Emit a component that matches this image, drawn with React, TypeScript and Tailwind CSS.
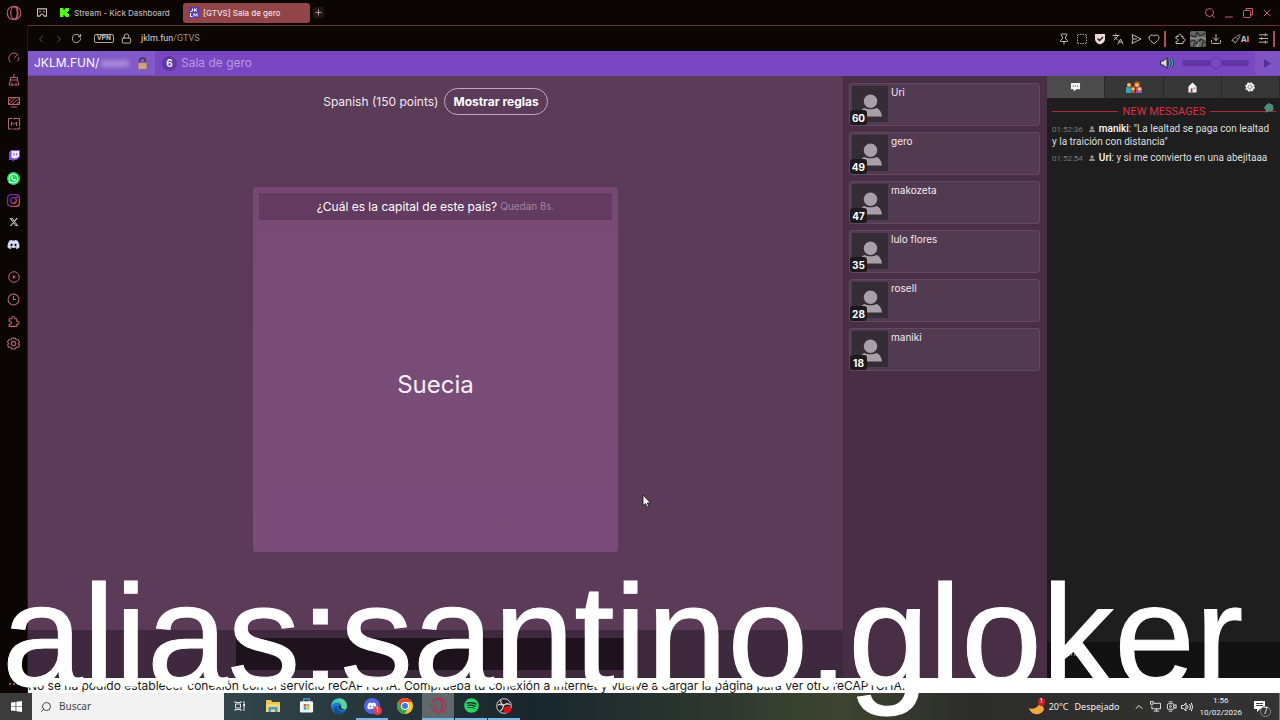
import type { ReactNode } from "react";
import {
  ChevronLeft,
  ChevronRight,
  ChevronUp,
  Clock3,
  Download,
  Heart,
  Languages,
  Lock,
  Minus,
  Pin,
  Plus,
  RotateCw,
  Search,
  SquareDashed,
  X,
} from "lucide-react";
import { FaDiscord, FaSpotify, FaWhatsapp, FaXTwitter } from "react-icons/fa6";

const players = [
  { name: "Uri", score: 60 },
  { name: "gero", score: 49 },
  { name: "makozeta", score: 47 },
  { name: "lulo flores", score: 35 },
  { name: "rosell", score: 28 },
  { name: "maniki", score: 18 },
];

const messages = [
  { time: "01:52:36", author: "maniki", text: '"La lealtad se paga con lealtad y la traición con distancia"' },
  { time: "01:52:54", author: "Uri", text: "y si me convierto en una abejitaaa" },
];

function OperaIcon({ className }: { className: string }) {
  return (
    <svg viewBox="0 0 16 16" className={className} fill="none" stroke="currentColor" strokeWidth="1.1">
      <circle cx="8" cy="8" r="6.8" />
      <ellipse cx="8" cy="8" rx="3.2" ry="6" />
      <path d="M10 2.3c2.6 1.6 2.6 9.8 0 11.4" />
    </svg>
  );
}

function PuzzleIcon({ className }: { className: string }) {
  return (
    <svg viewBox="0 0 24 24" className={className} fill="none" stroke="currentColor" strokeWidth="2" strokeLinejoin="round">
      <path d="M4 7h4.5a3.2 3.2 0 1 1 6 0H18v4.500a3 3 0 1 1 0 5.500V21H4v-4a3 3 0 1 0 0-5.500z" />
    </svg>
  );
}

function Person({ className }: { className: string }) {
  return (
    <svg viewBox="0 0 24 24" className={className} fill="currentColor">
      <circle cx="12" cy="7.5" r="7" />
      <path d="M0 23.500c.5-5 3-8.300 6-9 3 2 9 2 12 0 3 .7 5.500 4 6 9z" />
    </svg>
  );
}

function IconButton({ label, className, children }: { label: string; className?: string; children: ReactNode }) {
  return (
    <button type="button" aria-label={label} className={`flex items-center justify-center ${className ?? ""}`}>
      {children}
    </button>
  );
}

function TabStrip() {
  return (
    <div className="flex h-[25px] shrink-0 items-center bg-[#0b0504] font-['Inter',sans-serif] text-[8px] font-medium">
      <IconButton label="Menú de Opera" className="w-7 text-[#c8606e]">
        <OperaIcon className="size-4" />
      </IconButton>
      <IconButton label="Espacios de trabajo" className="w-[27px] text-[#c9bdbd]">
        <svg viewBox="0 0 12 10" className="h-[9px] w-3" fill="none" stroke="currentColor" strokeWidth="1.200">
          <path d="M1 1h10v8H8.500L7 7H5L3.500 9H1z" />
          <path d="M3 4h1.500M7.500 4H9" />
        </svg>
      </IconButton>
      <a href="#stream" className="flex w-[128px] items-center gap-[5px] pl-[5px] whitespace-nowrap text-[#b9b3b2]">
        <svg viewBox="0 0 9 9" className="size-[9px]" fill="#53fc18">
          <path d="M0 0h3.500v2h1V1h1V0H9v3H8v1H7v1h1v1h1v3H5.500V8h-1V7h-1v2H0z" />
        </svg>
        Stream - Kick Dashboard
      </a>
      <a href="#sala" className="flex h-5 w-[127px] items-center gap-1 rounded-[3px] bg-[#914549] pl-[6px] text-[#f5dfe0]">
        <svg viewBox="0 0 10 11" className="h-[11px] w-[10px]">
          <rect width="10" height="11" rx="2" fill="#5737c8" />
          <path d="M3.500 1.500v2.500L1.500 4.500M5.500 1.500v3M8 1.500L6 3l2 1.500M1.500 6v3.500h2M5 9.500V6.500l1.500 2 1.500-2v3" fill="none" stroke="#fff" />
        </svg>
        [GTVS] Sala de gero
      </a>
      <IconButton label="Nueva pestaña" className="ml-[3px] size-[11px] rounded-[2px] bg-[#201716] text-[#cfc4c3]">
        <Plus className="size-[9px]" />
      </IconButton>
      <div className="ml-auto flex items-center gap-[7px] pr-[7px] text-[#c8606e]">
        <IconButton label="Buscar pestañas"><Search className="size-3" /></IconButton>
        <IconButton label="Minimizar" className="pt-2"><Minus className="size-3" /></IconButton>
        <IconButton label="Restaurar">
          <svg viewBox="0 0 12 12" className="size-3" fill="none" stroke="currentColor">
            <rect x="1.500" y="3.500" width="7" height="7" rx="1" />
            <path d="M4 3.500v-2h6.500V8h-2" />
          </svg>
        </IconButton>
        <IconButton label="Cerrar"><X className="size-3" /></IconButton>
      </div>
    </div>
  );
}

function Sidebar() {
  const item = "h-[22px] w-7";
  return (
    <nav aria-label="Barra lateral" className="flex w-7 shrink-0 flex-col items-center border-r border-[#2c1013] bg-[#0b0504] pt-[22px] text-[#b8666d]">
      <IconButton label="GX Control" className={item}>
        <svg viewBox="0 0 12 12" className="size-3" fill="none" stroke="currentColor">
          <path d="M3 10.500A5 5 0 1 1 9 2M10.800 5A5 5 0 0 1 9.500 9.500M6 6l4.500-4" />
        </svg>
      </IconButton>
      <IconButton label="GX Cleaner" className={item}>
        <svg viewBox="0 0 12 12" className="size-3" fill="none" stroke="currentColor">
          <path d="M6 0v3M2.500 3.500h7v2.500h-7zM2.500 6L1 11h10L9.500 6M4 11V8.500M8 11V8.500" />
        </svg>
      </IconButton>
      <IconButton label="Fondos" className={item}>
        <svg viewBox="0 0 12 12" className="size-3" fill="none" stroke="currentColor">
          <path d="M.5 1.500h11v7H.5zM1 5l4-3.500M1 8l7-6.500M4 8.500l7-6M8 8.500l3.500-3M3 11h6" />
        </svg>
      </IconButton>
      <IconButton label="Mods" className={item}>
        <svg viewBox="0 0 12 12" className="size-3" fill="none" stroke="currentColor">
          <path d="M4 .5H.5V11H4M5 .5h6.500V8M5 11h6.500V9M3.500 8V4L6 6.500 8.500 4v4" />
        </svg>
      </IconButton>
      <IconButton label="Twitch" className="mt-[10px] h-[22px] w-7">
        <svg viewBox="0 0 12 12" className="size-3">
          <path d="M3 0h9v7L8.500 10H6.500L4.500 12V10H1V2.500z" fill="#7a48e0" />
          <path d="M3.500 1H11v5.500L9 8H7.500L6 9.300V8H3.500z" fill="#f1ebff" />
          <path d="M6 3v2.500M8.800 3v2.500" stroke="#7a48e0" />
        </svg>
      </IconButton>
      <IconButton label="WhatsApp" className={item}>
        <span className="flex size-[13px] items-center justify-center rounded-full bg-[#22d960] text-white"><FaWhatsapp className="size-[11px]" /></span>
      </IconButton>
      <IconButton label="Instagram" className="h-[22px] w-7">
        <svg viewBox="0 0 12 12" className="size-[13px]" fill="none" stroke="url(#insta)" strokeWidth="1.200">
          <defs>
            <linearGradient id="insta" x1="0" y1="0" x2="1" y2="1">
              <stop offset="0" stopColor="#5b2bc0" />
              <stop offset=".55" stopColor="#a0318f" />
              <stop offset="1" stopColor="#d0713a" />
            </linearGradient>
          </defs>
          <rect x=".6" y=".6" width="10.800" height="10.800" rx="3" />
          <circle cx="6" cy="6" r="2.600" />
          <circle cx="9" cy="3" r=".3" />
        </svg>
      </IconButton>
      <IconButton label="X" className="h-[22px] w-7 text-[#d5d0d0]"><FaXTwitter className="size-[10px]" /></IconButton>
      <IconButton label="Discord" className="h-[22px] w-7 text-[#d6d9f5]"><FaDiscord className="size-[13px]" /></IconButton>
      <IconButton label="Reproductor" className="mt-[11px] h-[22px] w-7">
        <svg viewBox="0 0 12 12" className="size-3" fill="none" stroke="currentColor">
          <circle cx="6" cy="6" r="5.300" />
          <path d="M4.800 4v4L8 6z" fill="currentColor" stroke="none" />
        </svg>
      </IconButton>
      <IconButton label="Historial" className={item}><Clock3 className="size-[13px]" /></IconButton>
      <IconButton label="Extensiones" className={item}><PuzzleIcon className="size-[13px]" /></IconButton>
      <IconButton label="Configuración" className={item}>
        <svg viewBox="0 0 12 12" className="size-[13px]" fill="none" stroke="currentColor">
          <path d="M4.500 1h3l1 1.500h2L11.500 5l-1 1 1 1.500-1 2h-2L7.500 11h-3l-1-1.500h-2l-1-2 1-1.500-1-1.500 1-2h2z" />
          <circle cx="6" cy="6" r="2" />
        </svg>
      </IconButton>
      <IconButton label="Más" className="mt-auto h-[18px] w-7">
        <svg viewBox="0 0 12 4" className="h-1 w-3" fill="currentColor">
          <circle cx="2" cy="2" r="1" />
          <circle cx="6" cy="2" r="1" />
          <circle cx="10" cy="2" r="1" />
        </svg>
      </IconButton>
    </nav>
  );
}

function AddressBar() {
  return (
    <div className="flex h-[26px] shrink-0 items-center border-t border-[#6d2c31] bg-[#0b0504] text-[#c6bdbb]">
      <div className="flex items-center gap-[6px] pl-[7px]">
        <IconButton label="Atrás" className="text-[#5c5250]"><ChevronLeft className="size-3" /></IconButton>
        <IconButton label="Adelante" className="text-[#5c5250]"><ChevronRight className="size-3" /></IconButton>
        <IconButton label="Recargar"><RotateCw className="size-[11px]" /></IconButton>
      </div>
      <button type="button" className="ml-3 flex h-[9px] items-center rounded-[2px] border border-[#b0a7a5] px-[2px] font-['Roboto',sans-serif] text-[7px] font-bold">VPN</button>
      <Lock className="ml-[7px] size-[11px]" />
      <span className="ml-[9px] font-['Roboto',sans-serif] text-[9px] text-[#dcd6d4]">
        jklm.fun<span className="text-[#a78b89]">/GTVS</span>
      </span>
      <div className="ml-auto flex items-center gap-[6px]">
        <IconButton label="Fijar"><Pin className="size-3" /></IconButton>
        <IconButton label="Captura"><SquareDashed className="size-3" /></IconButton>
        <IconButton label="Bloqueador">
          <svg viewBox="0 0 12 12" className="size-3">
            <path d="M1 1h10v5c0 3-2.500 4.500-5 5.500C3.500 10.500 1 9 1 6z" fill="#ead9d8" />
            <path d="M3.500 5.500l2 2 3.500-3.500" fill="none" stroke="#2a1517" strokeWidth="1.300" />
          </svg>
        </IconButton>
        <IconButton label="Traducir"><Languages className="size-3" /></IconButton>
        <IconButton label="Enviar">
          <svg viewBox="0 0 12 12" className="size-3" fill="none" stroke="currentColor">
            <path d="M2 1.500L11 6l-9 4.500L3 6zM3 6h4" />
          </svg>
        </IconButton>
        <IconButton label="Favoritos"><Heart className="size-3" /></IconButton>
      </div>
      <span className="mr-2 ml-1 h-4 w-[2px] bg-[#a9505a]" />
      <div className="flex items-center gap-1">
        <IconButton label="Extensiones"><PuzzleIcon className="size-3" /></IconButton>
        <IconButton label="Perfil">
          <svg viewBox="0 0 16 16" className="size-4">
            <rect width="16" height="16" rx="2" fill="#666" />
            <path d="M0 4l5 2 2-5 3 4 6-3M0 11l4-2 3 4 4-5 5 4M3 16l2-4M12 16l1-5" fill="none" stroke="#303030" strokeWidth="1.300" />
            <path d="M0 7l6 1 4-2 6 2M7 16l2-5" fill="none" stroke="#a4a4a4" />
          </svg>
        </IconButton>
        <IconButton label="Descargas"><Download className="size-3" /></IconButton>
        <button type="button" className="mx-[5px] flex items-center font-['Inter',sans-serif] text-[8px] font-bold">
          <svg viewBox="0 0 12 12" className="size-[10px]" fill="none" stroke="currentColor">
            <path d="M1 8l4-4.500 3.500 3L5 11 3.500 8.500zM7 3l2-1.500L10.500 4 9 6M10 .5l1.500 1" />
          </svg>
          AI
        </button>
        <IconButton label="Panel">
          <svg viewBox="0 0 12 12" className="size-[11px]" fill="none" stroke="currentColor">
            <path d="M1 2h10M1 6h10M1 10h10M8 .5v3M4 4.500v3M8 8.500v3" />
          </svg>
        </IconButton>
        <span className="mr-[5px] h-4 w-[2px] bg-[#a9505a]" />
      </div>
    </div>
  );
}

function RoomHeader() {
  return (
    <header className="flex h-[25px] shrink-0 items-center bg-[#7847c1] pb-px text-[12px] text-white">
      <div className="flex h-full w-[127px] items-center bg-[#8159c8] pl-[6px]">
        <span>JKLM.FUN/</span>
        <span aria-hidden="true" className="ml-[2px] h-[7px] w-7 bg-[#a98ad8] blur-[2px]" />
        <svg viewBox="0 0 12 14" className="mr-[7px] ml-auto h-[13px] w-[11px]">
          <path d="M3 6V4a3 3 0 0 1 6 0v2" fill="none" stroke="#443158" strokeWidth="1.600" />
          <rect x="1" y="6" width="10" height="7.500" rx="1" fill="#cfa184" stroke="#6a4a5c" strokeWidth=".6" />
        </svg>
      </div>
      <span className="ml-[7px] flex size-[15px] items-center justify-center rounded-full bg-[#6039a0] text-[10px] font-semibold">6</span>
      <span className="ml-1 text-[#b898e4]">Sala de gero</span>
      <div className="ml-auto flex h-full items-center">
        <IconButton label="Silenciar">
          <svg viewBox="0 0 14 12" className="h-3 w-[14px]">
            <path d="M.7 4h2.500L7 .8v10.400L3.200 8H.7z" fill="#ddd" stroke="#241735" />
            <path d="M9 3q2 3 0 6M11 1.500q3 4.500 0 9" fill="none" stroke="#241735" strokeWidth="2.800" />
            <path d="M9 3q2 3 0 6M11 1.500q3 4.500 0 9" fill="none" stroke="#49a9c4" strokeWidth="1.500" />
          </svg>
        </IconButton>
        <input
          type="range"
          aria-label="Volumen"
          defaultValue={50}
          className="mr-[6px] ml-2 h-[6px] w-[67px] appearance-none rounded-full bg-[#5f36a3] [&::-webkit-slider-thumb]:size-3 [&::-webkit-slider-thumb]:appearance-none [&::-webkit-slider-thumb]:rounded-full [&::-webkit-slider-thumb]:border [&::-webkit-slider-thumb]:border-[#5f36a3] [&::-webkit-slider-thumb]:bg-[#7847c1]"
        />
        <IconButton label="Reproducir" className="h-full w-[25px] bg-[#8154c6]">
          <svg viewBox="0 0 10 10" className="size-[9px]" fill="#55309a"><path d="M1 0l8 5-8 5z" /></svg>
        </IconButton>
      </div>
    </header>
  );
}

function Game() {
  return (
    <main className="flex min-w-0 flex-1 flex-col bg-[#5c3b59]">
      <div className="flex items-center justify-center gap-[6px] pt-3 text-[12px] text-[#f3e9f2]">
        <span>Spanish (150 points)</span>
        <button type="button" className="h-[27px] rounded-full border border-[#bda9bc] px-2 text-[12px] font-bold text-white">Mostrar reglas</button>
      </div>
      <div className="flex min-h-0 flex-1 items-center justify-center pb-[6px]">
        <section className="flex aspect-square w-[365px] flex-col rounded-[3px] bg-linear-to-b from-[#75486f] via-[#794b76] via-15% to-[#7a4c79] p-[6px]">
          <h1 className="flex h-[27px] items-center justify-center gap-[3px] bg-[#633a60] text-[12px] text-white">
            ¿Cuál es la capital de este país? <span className="text-[10px] text-[#a184a0]">Quedan 8s.</span>
          </h1>
          <p className="flex flex-1 items-center justify-center pt-1 text-[24px] text-[#f6eff6]">Suecia</p>
        </section>
      </div>
      <form className="flex h-12 shrink-0 items-center justify-center bg-[#3f293e]">
        <input aria-label="Respuesta" className="h-8 w-[400px] max-w-full rounded-[3px] bg-[#1e131c] px-2 text-white outline-none" />
      </form>
    </main>
  );
}

function Players() {
  return (
    <aside className="w-[204px] shrink-0 border-l border-[#432b41] bg-[#482f45] pt-[7px] pr-[7px] pl-[5px]">
      <ul className="flex flex-col gap-[6px]">
        {players.map((player) => (
          <li key={player.name} className="relative flex h-[43px] gap-[3px] rounded-[3px] border border-[#624a60] bg-[#523a50] p-[2px] text-[10px] leading-[12px] text-[#f4eaf3]">
            <span className="flex size-9 items-end justify-center bg-[#352d35] pb-[5px] text-[#a99fa9]">
              <Person className="size-[23px]" />
            </span>
            <span>{player.name}</span>
            <span className="absolute bottom-0 left-0 flex h-[15px] w-[17px] items-center justify-center rounded-[3px] bg-[#1d191d] text-[10px] font-bold text-white">
              {player.score}
            </span>
          </li>
        ))}
      </ul>
    </aside>
  );
}

function ChatTab({ label, active, children }: { label: string; active?: boolean; children: ReactNode }) {
  return (
    <button type="button" aria-label={label} className={`flex flex-1 items-center justify-center border-r border-[#292929] ${active ? "bg-[#4b4b4b]" : "bg-[#373737]"}`}>
      {children}
    </button>
  );
}

function Chat() {
  return (
    <aside className="flex w-[233px] shrink-0 flex-col bg-[#1e1e1e] font-['Roboto',sans-serif] text-[10px] leading-[13px] text-[#dedede]">
      <div className="flex h-[22px] shrink-0">
        <ChatTab label="Chat" active>
          <svg viewBox="0 0 12 11" className="h-[10px] w-[11px]">
            <path d="M1 1h10v7H7l-3 2.500V8H1z" fill="#f4f4f4" />
            <path d="M3 4.500h1.200M5.400 4.500h1.200M7.800 4.500H9" stroke="#333" />
          </svg>
        </ChatTab>
        <ChatTab label="Jugadores">
          <svg viewBox="0 0 18 12" className="h-3 w-[18px]">
            <path d="M1 6h5v6H1z" fill="#35a4b5" />
            <path d="M11 6h6v6h-6z" fill="#ab4c89" />
            <circle cx="4" cy="3.500" r="3" fill="#5a2d1c" />
            <circle cx="4" cy="4" r="2" fill="#efba66" />
            <circle cx="12" cy="3.500" r="3.200" fill="#a85222" />
            <circle cx="12" cy="4" r="2" fill="#efba66" />
            <circle cx="8" cy="7.500" r="2.400" fill="#a85222" />
            <circle cx="8" cy="8" r="1.600" fill="#f3cb7a" />
            <circle cx="14.500" cy="8" r="1.800" fill="#f3cb7a" />
            <path d="M6 10h4v2H6z" fill="#d14637" />
            <path d="M12 10h5v2h-5z" fill="#7a63cc" />
          </svg>
        </ChatTab>
        <ChatTab label="Sala">
          <svg viewBox="0 0 10 12" className="h-[11px] w-[9px]">
            <path d="M5 .5l4.500 4.500v6.500H.5V5z" fill="#f2f2f2" />
            <path d="M3 7h2v4.500H3z" fill="#b83b37" />
            <path d="M6 6h2v2H6z" fill="#5aa7cf" />
          </svg>
        </ChatTab>
        <ChatTab label="Ajustes">
          <svg viewBox="0 0 12 12" className="size-[10px]">
            <circle cx="6" cy="6" r="4.800" fill="#f2f2f2" stroke="#f2f2f2" strokeDasharray="2 1.770" strokeWidth="2" />
            <circle cx="6" cy="6" r="2.400" fill="none" stroke="#444" strokeDasharray="1.800 .7" />
          </svg>
        </ChatTab>
      </div>
      <div className="flex min-h-0 flex-1 flex-col gap-[3px] pr-1 pl-[5px]">
        <div className="relative mt-[6px] flex items-center gap-[5px] text-[11px] leading-[15px] text-[#dc3148]">
          <span className="h-px flex-1 bg-[#a72f3c]" />
          NEW MESSAGES
          <span className="h-px flex-1 bg-[#a72f3c]" />
          <svg viewBox="0 0 10 10" className="absolute -top-[1px] right-[2px] size-[10px]">
            <path d="M5 0l4 2 .5 5-3 1.500L5 8l-3.500 2L2 7.500 0 5l2-3z" fill="#4a8f7d" />
          </svg>
        </div>
        {messages.map((message) => (
          <p key={message.time}>
            <span className="mr-[6px] text-[8px] leading-none text-[#7a7a7a]">{message.time}</span>
            <Person className="mr-1 inline size-[6px] align-baseline text-[#8c8c8c]" />
            <b className="font-medium text-white">{message.author}</b>: {message.text}
          </p>
        ))}
      </div>
      <textarea aria-label="Mensaje" placeholder="mania" className="h-9 shrink-0 resize-none bg-[#121212] px-[9px] py-1 outline-none placeholder:text-[#999]" />
    </aside>
  );
}

function TaskButton({ label, open, active, children }: { label: string; open?: boolean; active?: boolean; children: ReactNode }) {
  return (
    <button
      type="button"
      aria-label={label}
      className={`flex w-8 items-center justify-center border-b-2 ${open ? "border-[#76b9e8]" : "border-transparent"} ${active ? "bg-[#5f686b]" : ""}`}
    >
      {children}
    </button>
  );
}

function Taskbar() {
  return (
    <footer className="flex h-[27px] shrink-0 bg-[#303030] font-['Noto_Sans',sans-serif] text-[9px] text-[#f1f1f1]">
      <IconButton label="Inicio" className="w-8 bg-[#3c3c3c]">
        <svg viewBox="0 0 12 12" className="size-[11px]" fill="#fff"><path d="M0 1.700L5 1v4.600H0zM5.800.9L12 0v5.600H5.800zM0 6.400h5V11l-5-.7zM5.800 6.400H12V12l-6.200-.9z" /></svg>
      </IconButton>
      <label className="flex w-48 items-center gap-[7px] bg-[#f2f2f2] pl-2 text-[10px] text-[#444]">
        <Search className="size-3 -scale-x-100" />
        <input placeholder="Buscar" className="min-w-0 flex-1 bg-transparent outline-none placeholder:text-[#444]" />
      </label>
      <div className="flex flex-1 gap-px bg-linear-to-r from-[#33464b] via-[#19262c] via-50% to-[#3d4430]">
        <TaskButton label="Vista de tareas">
          <svg viewBox="0 0 12 10" className="h-[10px] w-3" fill="none" stroke="#dedede"><path d="M1 0v1.500h6V0M1.500 3h5v4h-5zM1 10V8.500h6V10M10 0v10" /><path d="M9.500 3h1.500v2H9.500z" fill="#fff" stroke="none" /></svg>
        </TaskButton>
        <TaskButton label="Explorador de archivos">
          <svg viewBox="0 0 16 14" className="h-[14px] w-4"><path d="M1 1h5l1.500 2H15v10H1z" fill="#f0c351" /><path d="M1 5h14v8H1z" fill="#fad66f" /><path d="M3.500 13V8h9v5H10v-2.500H6V13z" fill="#439bd3" /></svg>
        </TaskButton>
        <TaskButton label="Microsoft Store">
          <svg viewBox="0 0 16 16" className="size-[15px]"><path d="M5 4V1h6v3" fill="none" stroke="#3db1df" strokeWidth="1.300" /><rect x="1" y="3.500" width="14" height="12" rx="1.500" fill="#f4f4f4" /><path d="M5 6.500h2.700v2.700H5z" fill="#e84e31" /><path d="M8.300 6.500H11v2.700H8.300z" fill="#7db928" /><path d="M5 9.800h2.700v2.700H5z" fill="#159fd9" /><path d="M8.300 9.800H11v2.700H8.300z" fill="#f0b51b" /></svg>
        </TaskButton>
        <TaskButton label="Edge">
          <svg viewBox="0 0 16 16" className="size-4"><circle cx="8" cy="8" r="8" fill="#1979cb" /><path d="M1 5C4-2 16-1 16 8c0 3-4 4-6 2 2-3-1-6-5-5C2 5 1 7 0 9z" fill="#40c5bd" /><path d="M10 1c5 1 7 7 5 10-2 1-5 0-5-2 2-3-1-5-3-6z" fill="#61d38a" /><path d="M6 8c-1 4 4 7 8 5-3 4-9 4-11 0-1-3 1-5 3-5z" fill="#124e9c" /><path d="M7.500 8c1-2 3 0 2.500 1.500.5 1.500 2.500 2 4 1.500-2 2-7 1-6.500-3z" fill="#213338" /></svg>
        </TaskButton>
        <TaskButton label="Discord" open>
          <span className="relative flex size-4 items-center justify-center rounded-full bg-[#5462de] text-white">
            <FaDiscord className="size-[10px]" />
            <span className="absolute -right-[2px] -bottom-[1px] flex size-[9px] items-center justify-center rounded-full bg-[#df3d4b] text-[7px]">1</span>
          </span>
        </TaskButton>
        <TaskButton label="Chrome">
          <svg viewBox="0 0 16 16" className="size-4"><circle cx="8" cy="8" r="8" fill="#f9c623" /><path d="M1.100 4A8 8 0 0 1 14.900 4H8L4.600 10z" fill="#e44234" /><path d="M1.100 4A8 8 0 0 0 7.500 16l4-6H4.600z" fill="#35a34e" /><circle cx="8" cy="8" r="4" fill="#fff" /><circle cx="8" cy="8" r="3" fill="#3b7de5" /></svg>
        </TaskButton>
        <TaskButton label="Opera GX" open active><OperaIcon className="size-[17px] text-[#b82b54]" /></TaskButton>
        <TaskButton label="Spotify" open><FaSpotify className="size-[15px] text-[#27d865]" /></TaskButton>
        <TaskButton label="OBS Studio" open>
          <svg viewBox="0 0 16 16" className="size-4"><circle cx="8" cy="8" r="7.300" fill="#242024" stroke="#cfcfcf" /><path d="M5 2c-1 4 2 5 3 5s3-3 6 0M8 7c-2 2 0 5-4 6M2 7c3-2 4 1 6 0" fill="none" stroke="#cfcfcf" strokeWidth="1.300" /><circle cx="11.500" cy="11.500" r="3.600" fill="#df1019" /></svg>
        </TaskButton>
      </div>
      <div className="flex w-[440px] items-center justify-end bg-linear-to-r from-[#3d4430] via-[#2c2c2b] via-30% to-[#333]">
        <button type="button" className="mr-[14px] flex items-center gap-1">
          <span className="relative">
            <svg viewBox="0 0 16 16" className="size-4"><path d="M0 9c5 2 9-1 10-4 5 2 7 6 2 9-5 3-11 0-12-5z" fill="#f2a73b" /></svg>
            <span className="absolute -top-[1px] right-0 flex h-2 w-[7px] items-center justify-center rounded-full bg-[#c32127] text-[7px]">1</span>
          </span>
          20°C <span className="ml-[2px]">Despejado</span>
        </button>
        <IconButton label="Iconos ocultos" className="mr-[5px]"><ChevronUp className="size-3" /></IconButton>
        <IconButton label="Red" className="mr-[5px]">
          <svg viewBox="0 0 12 12" className="size-[11px]" fill="none" stroke="currentColor"><path d="M4 2.500h7.500v6H2V5M.5.500h3v3h-3zM7 8.500V11M4 11h6" /></svg>
        </IconButton>
        <IconButton label="Cámara" className="mr-1">
          <svg viewBox="0 0 12 12" className="size-[11px]" fill="none" stroke="currentColor"><rect x="1.500" y="3" width="7" height="6" rx="1" /><path d="M8.500 5L11 4v4L8.500 7M3 1h4M3 11h4" /><circle cx="5" cy="6" r="1" /></svg>
        </IconButton>
        <IconButton label="Sonido" className="mr-[6px]">
          <svg viewBox="0 0 12 12" className="size-3" fill="none" stroke="currentColor"><path d="M.5 4.500h2L5 2v8L2.500 7.500h-2zM6.500 4.500q1 1.500 0 3M8.500 3q2 3 0 6M10.300 1.800q2.500 4.200 0 8.400" /></svg>
        </IconButton>
        <div className="text-center font-['Roboto',sans-serif] text-[8px] leading-[12px]">
          <div>1:56</div>
          <div>10/02/2026</div>
        </div>
        <IconButton label="Notificaciones" className="relative mr-[10px] ml-[9px] size-[18px]">
          <svg viewBox="0 0 12 12" className="size-3"><path d="M0 0h11v8H6l-3 3V8H0z" fill="#fff" /><path d="M2 2.500h7M2 4.500h7" stroke="#444" /></svg>
          <span className="absolute -right-[2px] -bottom-[1px] flex size-[11px] items-center justify-center rounded-full border border-[#888] bg-[#333] text-[8px]">7</span>
        </IconButton>
        <span className="h-full w-px bg-[#777]" />
      </div>
    </footer>
  );
}

export default function App() {
  return (
    <div className="relative flex h-screen flex-col overflow-hidden bg-[#0b0504]">
      <TabStrip />
      <div className="flex min-h-0 flex-1">
        <Sidebar />
        <div className="flex min-w-0 flex-1 flex-col font-['Inter',sans-serif]">
          <AddressBar />
          <RoomHeader />
          <div className="flex min-h-0 flex-1">
            <Game />
            <Players />
            <Chat />
          </div>
          <p className="h-[15px] shrink-0 bg-white text-[12px] leading-[15px] whitespace-nowrap text-[#161616]">
            No se ha podido establecer conexión con el servicio reCAPTCHA. Comprueba tu conexión a Internet y vuelve a cargar la página para ver otro reCAPTCHA.
          </p>
        </div>
      </div>
      <Taskbar />
      <div className="pointer-events-none absolute bottom-[11px] left-[2px] font-['Liberation_Sans',sans-serif] text-[145px] leading-none whitespace-nowrap text-white [-webkit-text-stroke:1px_white]">
        alias:santino.gloker
      </div>
      <svg viewBox="0 0 10 14" className="pointer-events-none absolute top-[494px] left-[642px] h-[14px] w-[10px]">
        <path d="M1 1v10.500l2.500-2 1.800 3.500 1.500-.8L5.200 9H8.500z" fill="#fff" stroke="#111" strokeWidth=".8" />
      </svg>
    </div>
  );
}
